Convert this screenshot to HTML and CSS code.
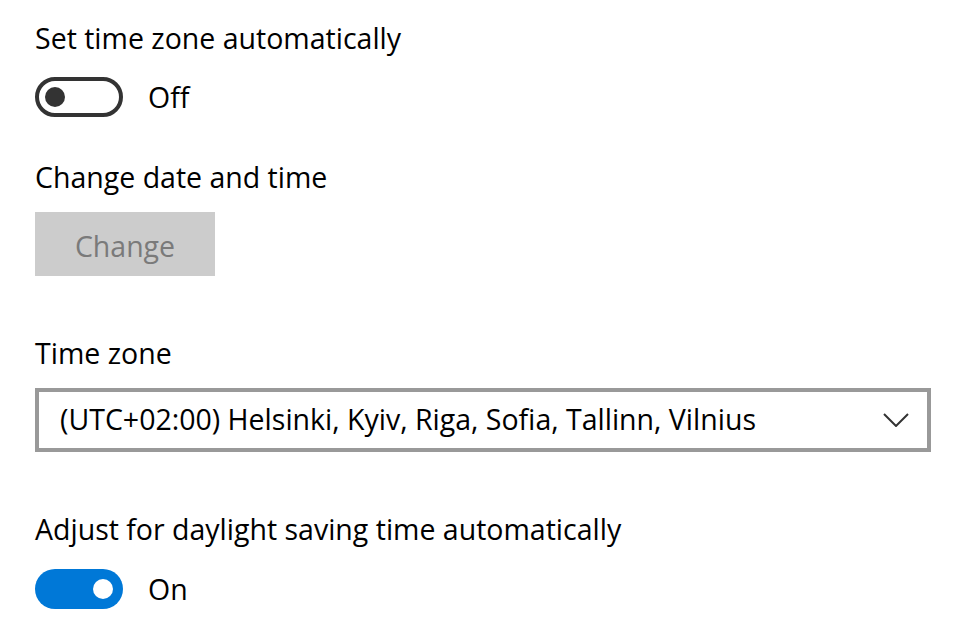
FILE: index.html
```html
<!DOCTYPE html>
<html lang="en">
<head>
<meta charset="utf-8">
<title>Date &amp; time</title>
<link rel="stylesheet" href="styles.css">
</head>
<body>
<main class="page">
  <section class="setting setting-first">
    <div class="label">Set time zone automatically</div>
    <div class="toggle-row">
      <span class="toggle toggle-off"><span class="knob"></span></span>
      <span class="toggle-text">Off</span>
    </div>
  </section>

  <section class="setting setting-change">
    <div class="label">Change date and time</div>
    <button class="btn" disabled>Change</button>
  </section>

  <section class="setting setting-zone">
    <div class="label">Time zone</div>
    <div class="select">
      <span class="select-text">(UTC+02:00) Helsinki, Kyiv, Riga, Sofia, Tallinn, Vilnius</span>
      <svg class="chevron" width="26" height="14" viewBox="0 0 26 14" aria-hidden="true">
        <path d="M1 1 L13 13 L25 1" fill="none" stroke="#333" stroke-width="2"/>
      </svg>
    </div>
  </section>

  <section class="setting setting-dst">
    <div class="label">Adjust for daylight saving time automatically</div>
    <div class="toggle-row">
      <span class="toggle toggle-on"><span class="knob"></span></span>
      <span class="toggle-text">On</span>
    </div>
  </section>
</main>
</body>
</html>
```

FILE: styles.css
```css
html, body {
  margin: 0;
  padding: 0;
  background: #ffffff;
}

body {
  font-family: "Open Sans", "Noto Sans", "Liberation Sans", sans-serif;
  font-size: 28.5px;
  color: #000000;
}

.page {
  display: flex;
  flex-direction: column;
  padding: 18px 0 0 35px;
}

.label {
  line-height: 40px;
  height: 40px;
  white-space: nowrap;
}

.setting-change { margin-top: 40px; }
.setting-zone { margin-top: 57px; }
.setting-dst { margin-top: 57px; }

.toggle-row {
  display: flex;
  align-items: center;
  gap: 25px;
  margin-top: 19px;
  height: 40px;
}

.setting-dst .toggle-row { margin-top: 20px; }

.toggle {
  box-sizing: border-box;
  width: 88px;
  height: 40px;
  border-radius: 20px;
  display: flex;
  align-items: center;
  flex: none;
}

.toggle-off {
  border: 4px solid #333333;
  background: #ffffff;
  justify-content: flex-start;
  padding-left: 6px;
}

.toggle-off .knob {
  width: 20px;
  height: 20px;
  border-radius: 50%;
  background: #333333;
}

.toggle-on {
  background: #0078d7;
  justify-content: flex-end;
  padding-right: 10px;
}

.toggle-on .knob {
  width: 20px;
  height: 20px;
  border-radius: 50%;
  background: #ffffff;
}

.toggle-text {
  line-height: 40px;
}

.btn {
  box-sizing: border-box;
  margin-top: 15px;
  width: 180px;
  height: 64px;
  border: none;
  background: #cccccc;
  color: #7a7a7a;
  font-family: inherit;
  font-size: 28.5px;
  padding: 4px 0 0 0;
  line-height: 60px;
}

.select {
  box-sizing: border-box;
  margin-top: 15px;
  width: 896px;
  height: 64px;
  border: 4px solid #999999;
  display: flex;
  align-items: center;
  justify-content: space-between;
  padding: 0 18px 3px 21px;
}

.select-text {
  white-space: nowrap;
}

.chevron {
  flex: none;
  margin-top: 3px;
}
```
